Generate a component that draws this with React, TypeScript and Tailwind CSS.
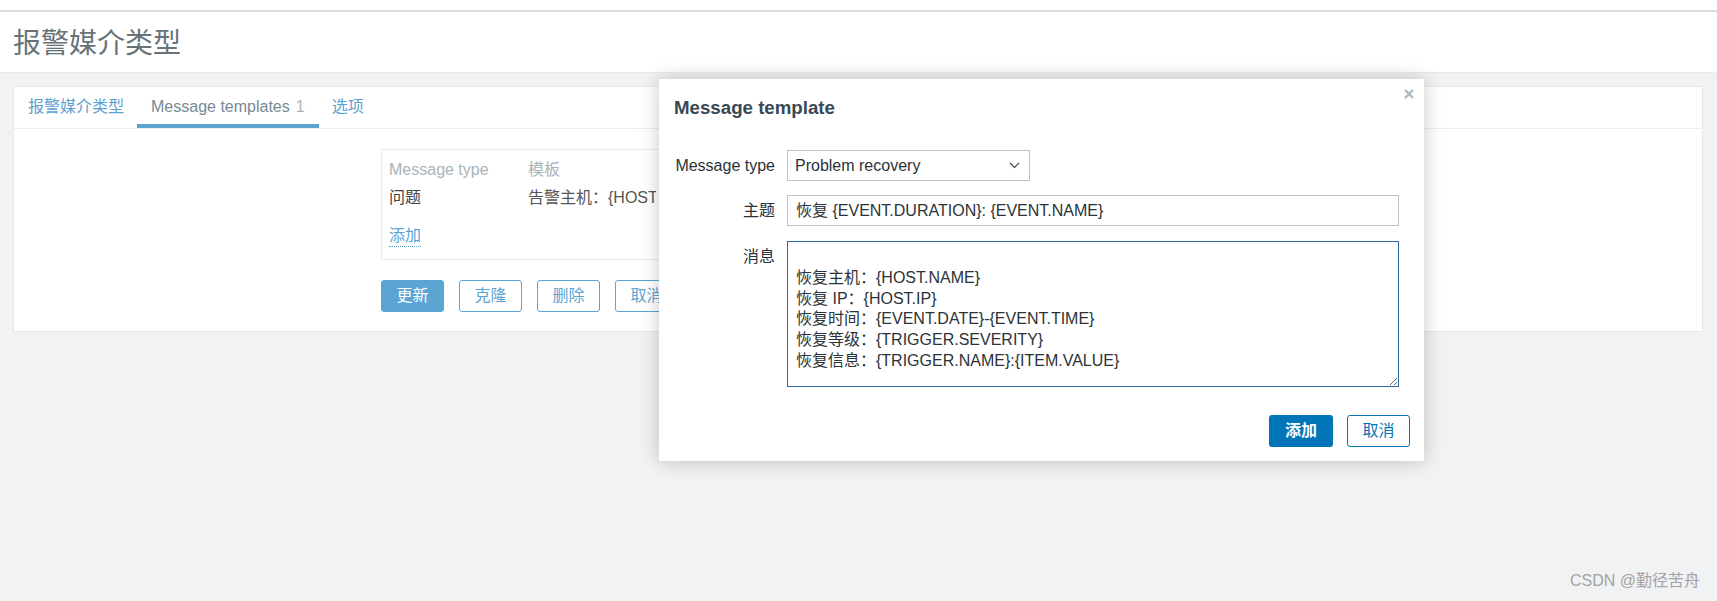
import React from "react";

const font = "font-['Liberation_Sans','Noto_Sans_CJK_SC',sans-serif]";

const message = `
恢复主机：{HOST.NAME}
恢复 IP：{HOST.IP}
恢复时间：{EVENT.DATE}-{EVENT.TIME}
恢复等级：{TRIGGER.SEVERITY}
恢复信息：{TRIGGER.NAME}:{ITEM.VALUE}`;

const Tabs = () => {
  return (
    <div className="flex pl-px border-b border-[#ebeef0]">
      <div className="h-[41px] flex items-center px-[13px] pt-[2px] border-b-4 border-transparent text-[#5ba1d2]">报警媒介类型</div>
      <div className="h-[41px] flex items-center px-[14px] pt-[2px] border-b-4 border-[#5ba4d2] text-[#768a95]">
        Message templates <span className="ml-[6px] text-[#a9b6bd]">1</span>
      </div>
      <div className="h-[41px] flex items-center px-[13px] pt-[2px] border-b-4 border-transparent text-[#5ba1d2]">选项</div>
    </div>
  );
};

const PageButton = ({ label, primary }: { label: string; primary?: boolean }) => {
  return (
    <button
      className={
        primary
          ? "w-[63px] h-[32px] rounded-[3px] bg-[#5ba5d3] text-white border border-[#5ba5d3]"
          : "w-[63px] h-[32px] rounded-[3px] bg-white text-[#5ba5d3] border border-[#5ba5d3]"
      }
    >
      {label}
    </button>
  );
};

const TemplatesTab = () => {
  return (
    <div className="pl-[367px] pt-[20px] pb-[19px]">
      <div className="w-[640px] border border-[#e8ebed] px-[7px] pt-[10px] pb-[11px]">
        <div className="flex h-[20px] items-center text-[#a8b4ba]">
          <div className="w-[139px]">Message type</div>
          <div>模板</div>
        </div>
        <div className="flex h-[20px] items-center mt-[8px]">
          <div className="w-[139px] text-[#444]">问题</div>
          <div className="w-[128px] overflow-hidden text-[#555] whitespace-nowrap">告警主机：{"{HOST.NAME}"}</div>
        </div>
        <div className="mt-[16px]">
          <span className="inline-block leading-[20px] text-[#5ba4d2] border-b border-dotted border-[#5ba4d2]">添加</span>
        </div>
      </div>
      <div className="flex gap-[15px] mt-[20px]">
        <PageButton label="更新" primary />
        <PageButton label="克隆" />
        <PageButton label="删除" />
        <PageButton label="取消" />
      </div>
    </div>
  );
};

const Modal = () => {
  return (
    <div className="absolute left-[659px] top-[79px] w-[765px] bg-white shadow-[0_0_18px_rgba(0,0,0,0.22)] px-[14px] pt-[17px] pb-[14px]">
      <svg className="absolute left-[745px] top-[10px]" width="10" height="10" viewBox="0 0 10 10">
        <path d="M1 1L9 9M9 1L1 9" stroke="#acbbc2" strokeWidth="2.4" />
      </svg>
      <div className="h-[24px] leading-[24px] text-[18.7px] font-bold text-[#384955] pl-px">Message template</div>
      <div className="mt-[30px] text-[#2b3338]">
        <div className="flex gap-[12px] items-start">
          <div className="w-[102px] h-[31px] flex items-center justify-end whitespace-nowrap">Message type</div>
          <div className="w-[243px] h-[31px] border border-[#b5c3ca] flex items-center justify-between pl-[7px] pr-[9px]">
            <span>Problem recovery</span>
            <svg width="11" height="7" viewBox="0 0 11 7">
              <path d="M1 1L5.5 5.5L10 1" fill="none" stroke="#3f4a50" strokeWidth="1.2" />
            </svg>
          </div>
        </div>
        <div className="flex gap-[12px] items-start mt-[14px]">
          <div className="w-[102px] h-[31px] flex items-center justify-end">主题</div>
          <div className="w-[612px] h-[31px] border border-[#b5c3ca] flex items-center pl-[8px]">
            恢复 {"{EVENT.DURATION}"}: {"{EVENT.NAME}"}
          </div>
        </div>
        <div className="flex gap-[12px] items-start mt-[15px]">
          <div className="w-[102px] h-[31px] flex items-center justify-end">消息</div>
          <textarea
            className="w-[612px] h-[146px] border border-[#2a6aa3] pl-[8px] pt-[5px] leading-[20.8px] text-[#2b3338] outline-none"
            defaultValue={message}
          />
        </div>
      </div>
      <div className="flex justify-end gap-[14px] mt-[28px]">
        <button className="w-[64px] h-[32px] rounded-[3px] bg-[#0275b8] text-white font-bold">添加</button>
        <button className="w-[63px] h-[32px] rounded-[3px] bg-white text-[#0275b8] border border-[#0275b8]">取消</button>
      </div>
    </div>
  );
};

const App = () => {
  return (
    <div className={`relative w-full h-[601px] overflow-hidden bg-[#f1f2f4] text-[16px] ${font}`}>
      <div className="h-[10px] bg-white" />
      <div className="h-[2px] bg-[#dcdcdc]" />
      <header className="h-[61px] bg-white border-b border-[#e8eaec] flex items-center pl-[13px] pt-[3px]">
        <h1 className="text-[28px] text-[#687378]">报警媒介类型</h1>
      </header>
      <div className="pl-[13px] pr-[14px] pt-[13px]">
        <div className="bg-white border border-[#e5e8ea]">
          <Tabs />
          <TemplatesTab />
        </div>
      </div>
      <Modal />
      <div className="absolute right-[17px] top-[571px] leading-[20px] text-[#a3a3a3]">CSDN @勤径苦舟</div>
    </div>
  );
};

export default App;
